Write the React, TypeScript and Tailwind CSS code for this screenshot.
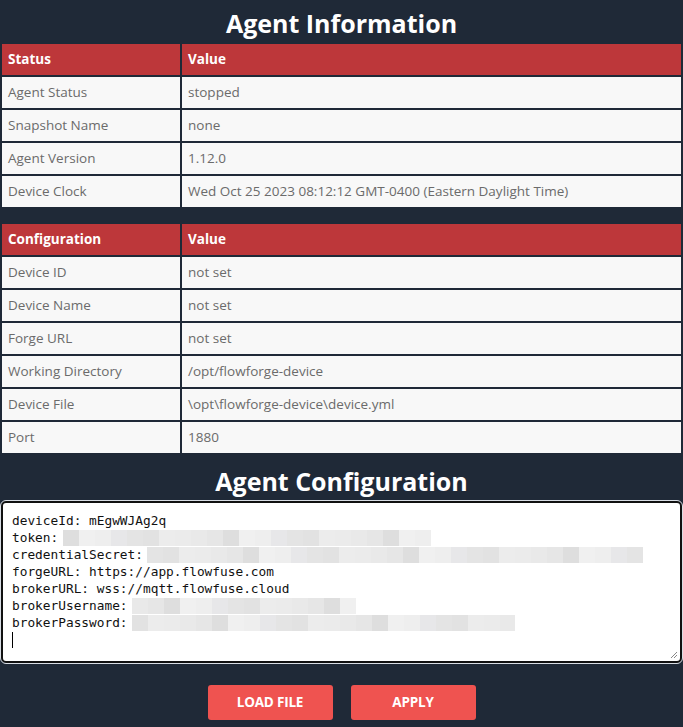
import React from "react";

const statusRows: [string, string][] = [
  ["Agent Status", "stopped"],
  ["Snapshot Name", "none"],
  ["Agent Version", "1.12.0"],
  ["Device Clock", "Wed Oct 25 2023 08:12:12 GMT-0400 (Eastern Daylight Time)"],
];

const configRows: [string, string][] = [
  ["Device ID", "not set"],
  ["Device Name", "not set"],
  ["Forge URL", "not set"],
  ["Working Directory", "/opt/flowforge-device"],
  ["Device File", "\\opt\\flowforge-device\\device.yml"],
  ["Port", "1880"],
];

const shades = ["#ececec", "#e6e6e6", "#eeeeee", "#e2e2e2", "#e9e9e9", "#f0f0f0", "#e4e4e4", "#ebebeb", "#dedede", "#e7e7e9"];

// pixelated blur over secrets
function Redact({ width }: { width: number }) {
  const n = Math.ceil(width / 16);
  return (
    <span className="inline-flex h-[16px] overflow-hidden" style={{ width }}>
      {Array.from({ length: n }).map((_, i) => (
        <span key={i} className="w-[16px] h-full shrink-0" style={{ background: shades[(i * 7 + width) % shades.length] }} />
      ))}
    </span>
  );
}

function InfoTable({ head, rows }: { head: string; rows: [string, string][] }) {
  return (
    <table className="w-full border-separate border-spacing-[2px] text-[13.5px]">
      <thead>
        <tr className="h-[31px]">
          <th className="w-[178px] bg-[#bd373a] text-white font-bold text-left px-[6px]">{head}</th>
          <th className="bg-[#bd373a] text-white font-bold text-left px-[6px]">Value</th>
        </tr>
      </thead>
      <tbody>
        {rows.map(([k, v]) => (
          <tr key={k} className="h-[31px]">
            <td className="bg-[#f8f8f8] text-[#6b6b6b] px-[6px]">{k}</td>
            <td className="bg-[#f8f8f8] text-[#6b6b6b] px-[6px]">{v}</td>
          </tr>
        ))}
      </tbody>
    </table>
  );
}

export default function App() {
  return (
    <div className="min-h-[727px] bg-[#1f2937] font-['Open_Sans',sans-serif] pb-[8px]">
      <h1 className="text-center text-white font-bold text-[25px] leading-[30px] pt-[8px] pb-[4px]">
        Agent Information
      </h1>
      <InfoTable head="Status" rows={statusRows} />
      <div className="h-[13px]" />
      <InfoTable head="Configuration" rows={configRows} />
      <h2 className="text-center text-white font-bold text-[25px] leading-[30px] mt-[11px] mb-[5px]">
        Agent Configuration
      </h2>
      <div className="relative mx-[1px] h-[162px] bg-white border-2 border-[#111] rounded-[5px] outline outline-1 outline-[#d8dde4] px-[9px] pt-[9px] font-['DejaVu_Sans_Mono',monospace] text-[12.8px] leading-[17px] text-[#111]">
        <div>deviceId: mEgwWJAg2q</div>
        <div className="flex items-center">token:<span className="w-[5px]" /><Redact width={368} /></div>
        <div className="flex items-center">credentialSecret:<span className="w-[4px]" /><Redact width={496} /></div>
        <div>forgeURL: https://app.flowfuse.com</div>
        <div>brokerURL: wss://mqtt.flowfuse.cloud</div>
        <div className="flex items-center">brokerUsername:<span className="w-[4px]" /><Redact width={224} /></div>
        <div className="flex items-center">brokerPassword:<span className="w-[4px]" /><Redact width={383} /></div>
        <div className="w-px h-[16px] bg-black mt-[1px]" />
        <svg className="absolute right-[2px] bottom-[2px]" width="9" height="9" viewBox="0 0 9 9">
          <path d="M8 2 L2 8 M8 5 L5 8" stroke="#888" strokeWidth="1" />
        </svg>
      </div>
      <div className="flex justify-center gap-[18px] mt-[22px]">
        <button className="w-[125px] h-[35px] rounded-[3px] bg-[#ef5350] text-white font-bold text-[13.5px] uppercase tracking-[-0.2px]">
          Load File
        </button>
        <button className="w-[125px] h-[35px] rounded-[3px] bg-[#ef5350] text-white font-bold text-[13.5px] uppercase tracking-[-0.2px]">
          Apply
        </button>
      </div>
    </div>
  );
}
